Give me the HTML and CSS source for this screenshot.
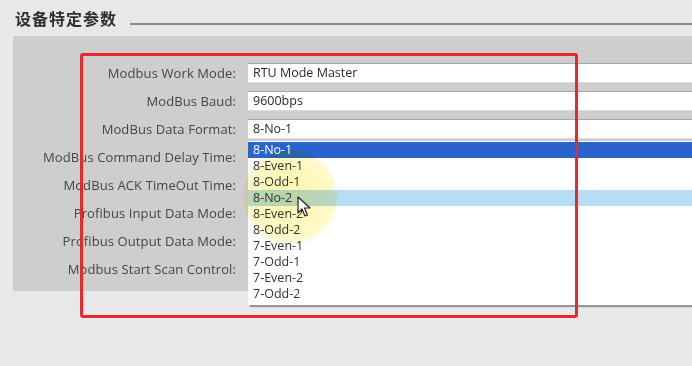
FILE: index.html
```html
<!DOCTYPE html>
<html lang="zh">
<head>
  <meta charset="UTF-8">
  <title>设备特定参数</title>
  <link rel="stylesheet" href="styles.css">
</head>
<body>
  <div class="section-head">
    <h2>设备特定参数</h2>
    <div class="rule"></div>
  </div>

  <div class="panel">
    <div class="form">
      <label>Modbus Work Mode:</label>
      <div class="field">RTU Mode Master</div>
      <label>ModBus Baud:</label>
      <div class="field">9600bps</div>
      <label>ModBus Data Format:</label>
      <div class="field">8-No-1</div>
      <label>ModBus Command Delay Time:</label>
      <div class="field"></div>
      <label>ModBus ACK TimeOut Time:</label>
      <div class="field"></div>
      <label>Profibus Input Data Mode:</label>
      <div class="field"></div>
      <label>Profibus Output Data Mode:</label>
      <div class="field"></div>
      <label>Modbus Start Scan Control:</label>
      <div class="field"></div>
    </div>
  </div>

  <!-- open drop-down of "ModBus Data Format" -->
  <ul class="dropdown">
    <li class="selected">8-No-1</li>
    <li>8-Even-1</li>
    <li>8-Odd-1</li>
    <li class="hover">8-No-2</li>
    <li>8-Even-2</li>
    <li>8-Odd-2</li>
    <li>7-Even-1</li>
    <li>7-Odd-1</li>
    <li>7-Even-2</li>
    <li>7-Odd-2</li>
  </ul>

  <div class="glow"></div>
  <svg class="cursor" width="14" height="22" viewBox="0 0 14 22">
    <path d="M1 1 L1 17 L5 13 L8 20 L10.5 19 L7.5 12 L13 12 Z" fill="#fff" stroke="#222" stroke-width="1.2" stroke-linejoin="round"/>
  </svg>

  <div class="highlight-box"></div>
</body>
</html>
```

FILE: styles.css
```css
:root {
  --bg: #e8e8e8;
  --panel: #cecece;
  --text: #333;
  --red: #e42a2a;
}

* {
  box-sizing: border-box;
}

body {
  margin: 0;
  width: 692px;
  height: 366px;
  overflow: hidden;
  background-color: var(--bg);
  font-family: 'Open Sans', 'Noto Sans CJK SC', sans-serif;
  color: var(--text);
  position: relative;
}

.section-head {
  display: flex;
  align-items: center;
  height: 36px;
  padding-left: 15px;
}

.section-head h2 {
  margin: 0;
  font-family: 'Noto Sans CJK SC', sans-serif;
  font-size: 16px;
  font-weight: bold;
  color: #2f2f2f;
  letter-spacing: 1px;
}

.rule {
  flex: 1;
  height: 2px;
  margin-left: 13px;
  margin-top: 12px;
  background-color: #8c8c8c;
}

.panel {
  margin-left: 13px;
  height: 255px;
  padding-top: 27px;
  background-color: var(--panel);
}

.form {
  display: grid;
  grid-template-columns: 223px 1fr;
  column-gap: 12px;
  row-gap: 8px;
}

.form label {
  height: 20px;
  line-height: 20px;
  text-align: right;
  font-size: 13px;
  letter-spacing: 0.1px;
  color: #454545;
  white-space: nowrap;
}

.field {
  height: 20px;
  line-height: 18px;
  padding-left: 5px;
  font-size: 12.5px;
  color: #2a2a2a;
  background-color: #fff;
  border-top: 1px solid #a8a8a8;
  border-bottom: 1px solid #dcdcdc;
}

.dropdown {
  position: absolute;
  left: 248px;
  top: 141px;
  width: 444px;
  height: 164px;
  margin: 0;
  padding: 1px 0 0;
  list-style: none;
  background-color: #fff;
  box-shadow: 2px 2px 1px rgba(0,0,0,0.35);
}

.dropdown li {
  height: 16px;
  line-height: 16px;
  padding-left: 5px;
  font-size: 12.5px;
  color: #333;
}

.dropdown li.selected {
  background-color: #2b63cc;
  color: #fff;
}

.dropdown li.hover {
  background-color: #b7dcf6;
}

/* pointer highlight from the screen recorder */
.glow {
  position: absolute;
  left: 243px;
  top: 150px;
  width: 94px;
  height: 94px;
  border-radius: 50%;
  background: radial-gradient(circle, rgba(255,238,110,0.55) 0%, rgba(255,238,110,0.42) 55%, rgba(255,238,110,0) 100%);
  mix-blend-mode: multiply;
  pointer-events: none;
}

.cursor {
  position: absolute;
  left: 297px;
  top: 196px;
}

.highlight-box {
  position: absolute;
  left: 80px;
  top: 53px;
  width: 498px;
  height: 265px;
  border: 3px solid var(--red);
  border-radius: 3px;
  pointer-events: none;
}
```
